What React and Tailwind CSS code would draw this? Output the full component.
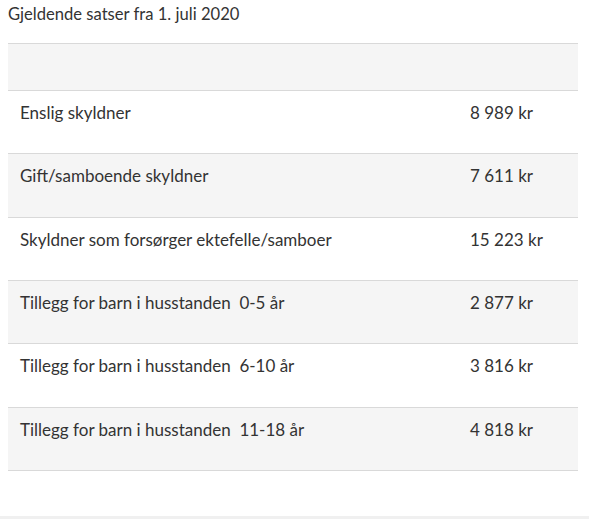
export default function App() {
  const rows = [
    ["Enslig skyldner", "8 989 kr"],
    ["Gift/samboende skyldner", "7 611 kr"],
    ["Skyldner som forsørger ektefelle/samboer", "15 223 kr"],
    ["Tillegg for barn i husstanden  0-5 år", "2 877 kr"],
    ["Tillegg for barn i husstanden  6-10 år", "3 816 kr"],
    ["Tillegg for barn i husstanden  11-18 år", "4 818 kr"],
  ];
  return (
    <div className="w-[589px] h-[519px] bg-white relative text-[#333333] text-[17px]" style={{ fontFamily: "Lato, 'Liberation Sans', sans-serif" }}>
      <div className="px-[8px] pt-[4px]">
        <div className="h-[39px] leading-[20px] text-[16.6px] whitespace-pre">Gjeldende satser fra 1. juli 2020</div>
        <div className="w-[570px] border-b border-[#d9d9d9]">
          <div className="h-[47px] border-t border-[#d9d9d9] bg-[#f5f5f5]" />
          {rows.map(([a, b], i) => (
            <div
              key={i}
              className={`flex h-[63.33px] border-t border-[#d9d9d9] pt-[10px] leading-[24px] whitespace-pre ${i % 2 === 1 ? "bg-[#f5f5f5]" : "bg-white"}`}
            >
              <div className="w-[462px] pl-[12px]">{a}</div>
              <div>{b}</div>
            </div>
          ))}
        </div>
      </div>
      <div className="absolute left-0 right-0 bottom-0 h-[3px] bg-[#f0f0f0]" />
    </div>
  );
}
